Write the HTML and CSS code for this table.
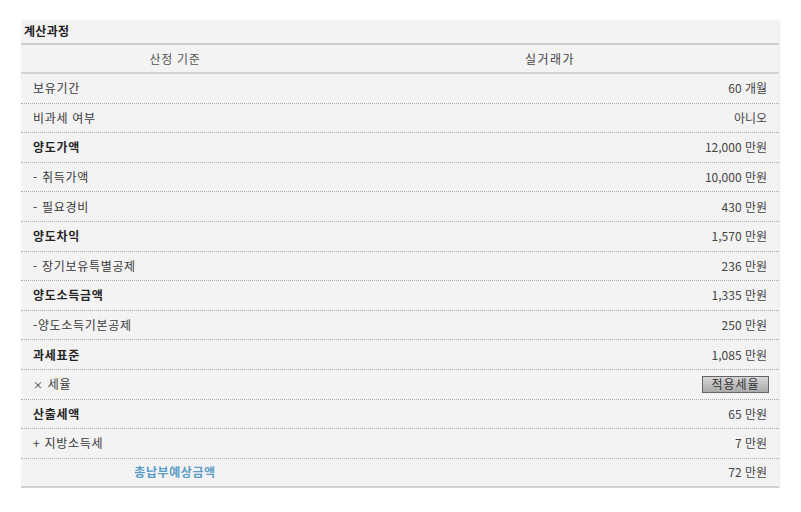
FILE: index.html
```html
<!DOCTYPE html>
<html lang="ko">
<head>
<meta charset="utf-8">
<title>계산과정</title>
<link rel="stylesheet" href="styles.css">
</head>
<body>
<div class="panel">
  <div class="title">계산과정</div>
  <div class="row head">
    <div class="c1">산정 기준</div>
    <div class="c2">실거래가</div>
  </div>
  <div class="row"><div class="c1">보유기간</div><div class="c2">60 개월</div></div>
  <div class="row"><div class="c1">비과세 여부</div><div class="c2">아니오</div></div>
  <div class="row"><div class="c1 b">양도가액</div><div class="c2">12,000 만원</div></div>
  <div class="row"><div class="c1">- 취득가액</div><div class="c2">10,000 만원</div></div>
  <div class="row"><div class="c1">- 필요경비</div><div class="c2">430 만원</div></div>
  <div class="row"><div class="c1 b">양도차익</div><div class="c2">1,570 만원</div></div>
  <div class="row"><div class="c1">- 장기보유특별공제</div><div class="c2">236 만원</div></div>
  <div class="row"><div class="c1 b">양도소득금액</div><div class="c2">1,335 만원</div></div>
  <div class="row"><div class="c1">-양도소득기본공제</div><div class="c2">250 만원</div></div>
  <div class="row"><div class="c1 b">과세표준</div><div class="c2">1,085 만원</div></div>
  <div class="row"><div class="c1"><span class="x">×</span> 세율</div><div class="c2"><button class="btn">적용세율</button></div></div>
  <div class="row"><div class="c1 b">산출세액</div><div class="c2">65 만원</div></div>
  <div class="row"><div class="c1">+ 지방소득세</div><div class="c2">7 만원</div></div>
  <div class="row last"><div class="c1 total">총납부예상금액</div><div class="c2">72 만원</div></div>
</div>
</body>
</html>
```
FILE: styles.css
```css
html, body {
  margin: 0;
  padding: 0;
  background: #ffffff;
}
body {
  font-family: "Noto Sans CJK KR", "Noto Sans", sans-serif;
  font-size: 12px;
  color: #3a3a3a;
}
.panel {
  margin: 20px 0 0 21px;
  width: 758px;
  background: #f3f3f3;
  box-shadow: 1px 1px 2px rgba(0,0,0,0.08);
}
.title {
  height: 25px;
  line-height: 22px;
  padding-left: 3px;
  font-weight: bold;
  color: #1e1e1e;
  letter-spacing: 0.3px;
  border-bottom: 2px solid #cdcdcd;
  box-sizing: border-box;
}
.row {
  display: flex;
  align-items: center;
  height: 29.6px;
  box-sizing: border-box;
  border-bottom: 1px dotted #a9a9a9;
  line-height: 16px;
}
.row.head {
  height: 29px;
  border-bottom: 2px solid #d4d4d4;
  color: #555;
  letter-spacing: 1.5px;
}
.row.head .c1, .row.head .c2 {
  text-align: center;
  padding: 0;
}
.row.head .c2 {
  padding-right: 8px;
}
.row.last {
  height: 29px;
  border-bottom: 2px solid #d0d0d0;
}
.c1 {
  width: 308px;
  padding-left: 12px;
  box-sizing: border-box;
  letter-spacing: 0.7px;
}
.c2 {
  flex: 1;
  text-align: right;
  padding-right: 12px;
  color: #444;
}
.x {
  font-size: 10px;
}
.b {
  font-weight: bold;
  color: #262626;
}
.total {
  text-align: center;
  padding-left: 0;
  color: #5a9cc8;
  font-weight: bold;
  letter-spacing: 0.6px;
}
.btn {
  font-family: "Noto Sans CJK KR", sans-serif;
  font-size: 12px;
  line-height: 14px;
  height: 17px;
  width: 67px;
  padding: 0;
  margin-right: -2px;
  color: #333;
  letter-spacing: 1px;
  border: 1px solid #666;
  background: linear-gradient(#d6d6d6, #aaaaaa);
  border-radius: 0;
}
```
